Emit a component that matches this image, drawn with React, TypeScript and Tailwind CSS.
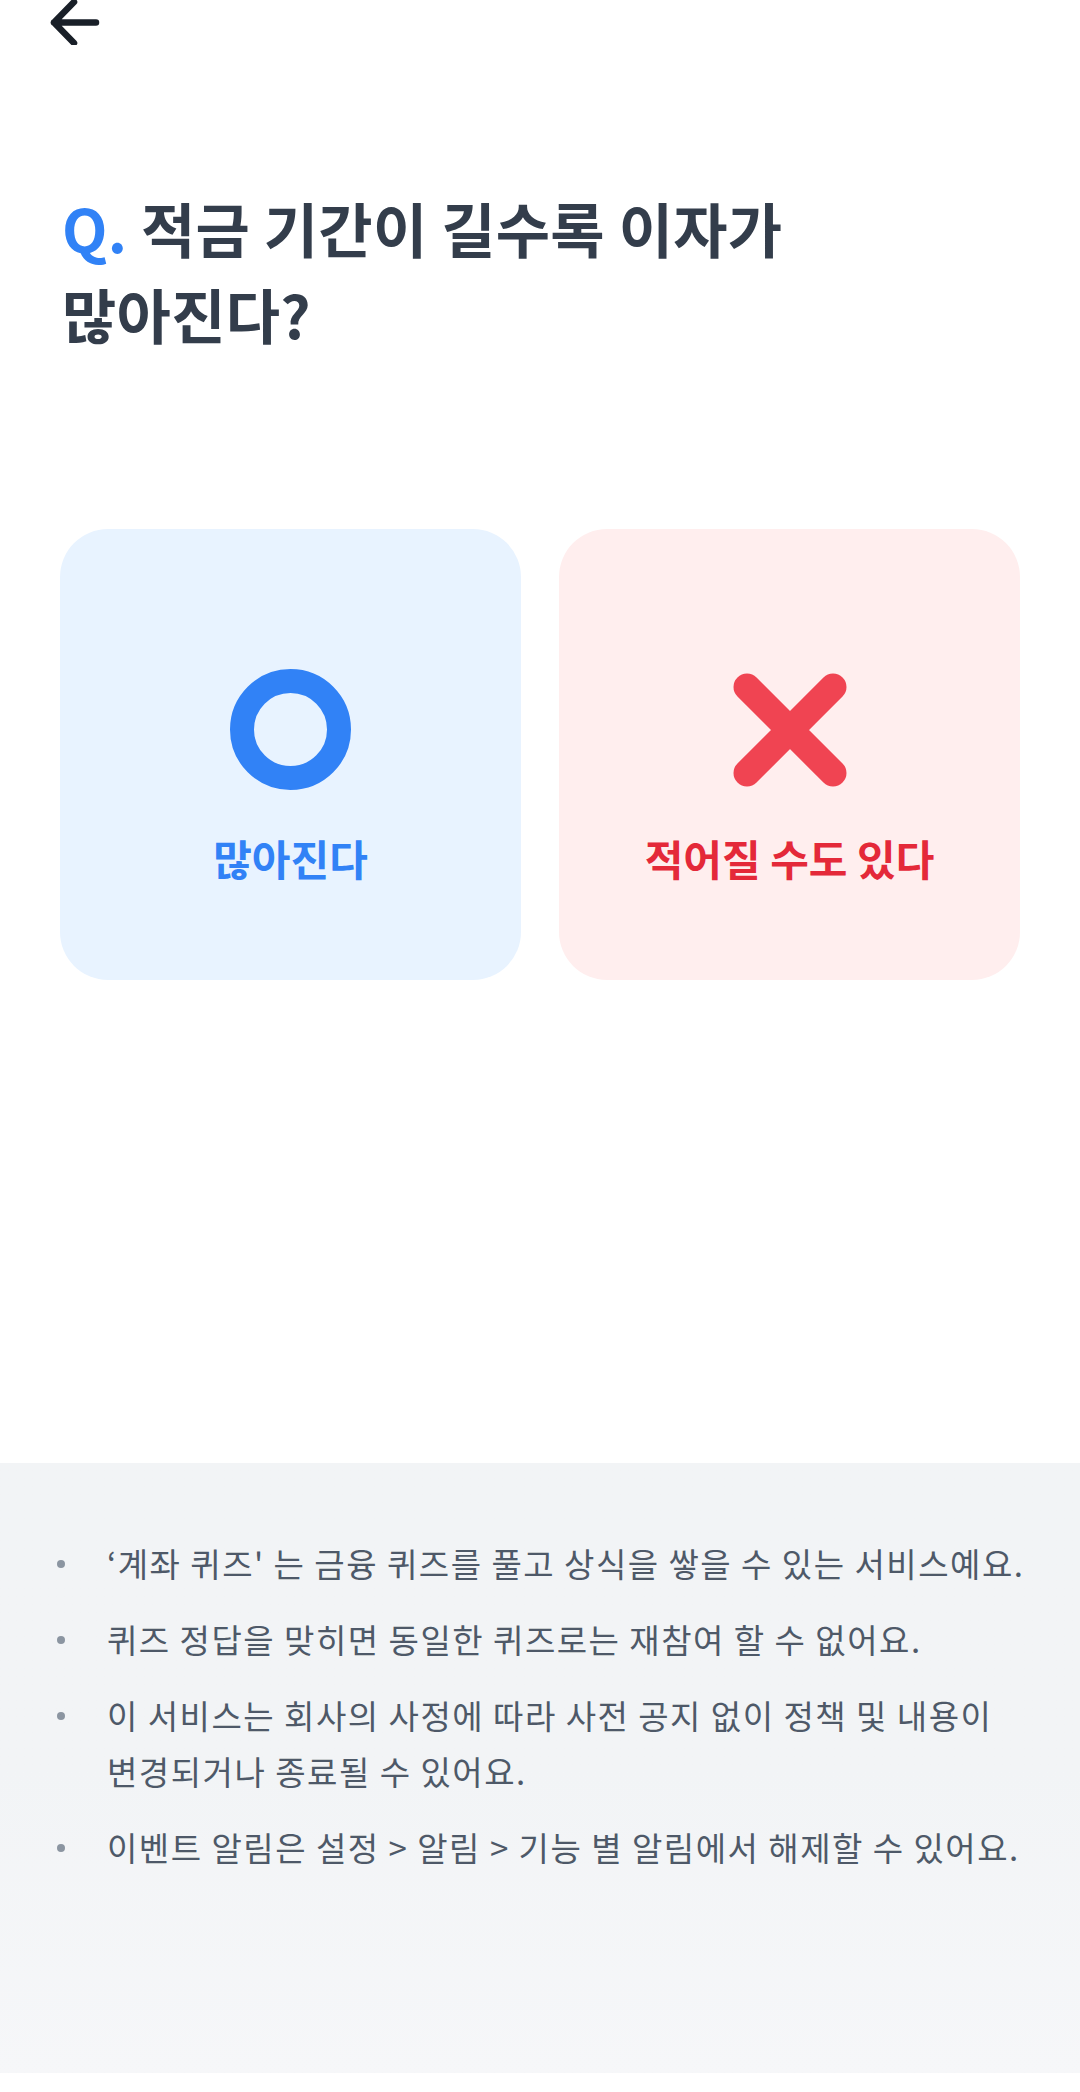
const FONT = "font-['Noto_Sans_CJK_KR','Noto_Sans',sans-serif]";

const NOTICES = [
  "‘계좌 퀴즈' 는 금융 퀴즈를 풀고 상식을 쌓을 수 있는 서비스예요.",
  "퀴즈 정답을 맞히면 동일한 퀴즈로는 재참여 할 수 없어요.",
  "이 서비스는 회사의 사정에 따라 사전 공지 없이 정책 및 내용이 변경되거나 종료될 수 있어요.",
  "이벤트 알림은 설정 > 알림 > 기능 별 알림에서 해제할 수 있어요.",
];

function BackArrow() {
  return (
    <svg width="64" height="48" viewBox="0 0 64 48" fill="none">
      <path
        d="M12 22.5H54M12 22.5L32 2M12 22.5L32 43"
        stroke="#191f28"
        strokeWidth="6.5"
        strokeLinecap="round"
        strokeLinejoin="round"
      />
    </svg>
  );
}

function CircleMark() {
  return (
    <svg width="121" height="121" viewBox="0 0 121 121" fill="none">
      <circle cx="60.5" cy="60.5" r="48.5" stroke="#3182f6" strokeWidth="24" />
    </svg>
  );
}

function CrossMark() {
  return (
    <svg width="114" height="114" viewBox="0 0 114 114" fill="none">
      <path
        d="M14 14L100 100M100 14L14 100"
        stroke="#f04452"
        strokeWidth="27"
        strokeLinecap="round"
      />
    </svg>
  );
}

export default function App() {
  return (
    <div className={`w-[1080px] h-[2092px] bg-white flex flex-col ${FONT}`}>
      <div className="h-[45px] pl-[42px] overflow-hidden">
        <BackArrow />
      </div>

      <h1 className="mt-[140px] pl-[62px] text-[59px] leading-[86px] font-bold tracking-[0.3px] text-[#333d4b]">
        <span className="text-[#3182f6]">Q.</span> 적금 기간이 길수록 이자가
        <br />
        많아진다?
      </h1>

      <div className="mt-[172px] px-[60px] grid grid-cols-2 gap-[38px]">
        <div className="h-[451px] rounded-[48px] bg-[#e8f3ff] flex flex-col items-center pt-[140px]">
          <div className="h-[121px] flex items-center justify-center">
            <CircleMark />
          </div>
          <span className="mt-[40px] text-[42px] leading-[56px] font-bold text-[#3182f6]">
            많아진다
          </span>
        </div>
        <div className="h-[451px] rounded-[48px] bg-[#ffeeee] flex flex-col items-center pt-[140px]">
          <div className="h-[121px] flex items-center justify-center">
            <CrossMark />
          </div>
          <span className="mt-[40px] text-[42px] leading-[56px] font-bold text-[#e42939]">
            적어질 수도 있다
          </span>
        </div>
      </div>

      <div className="mt-[483px] h-[610px] bg-gradient-to-b from-[#f2f4f6] from-50% to-[#f6f7f9] pt-[72px] pl-[57px] pr-[40px]">
        <ul className="flex flex-col gap-[20px]">
          {NOTICES.map((n) => (
            <li key={n} className="flex">
              <div className="w-[50px] h-[56px] shrink-0 flex items-center">
                <span className="mt-[2px] w-[8px] h-[8px] rounded-full bg-[#8b95a1]" />
              </div>
              <p className="text-[33px] leading-[56px] tracking-[1.5px] break-keep text-[#4e5968]">{n}</p>
            </li>
          ))}
        </ul>
      </div>
    </div>
  );
}
